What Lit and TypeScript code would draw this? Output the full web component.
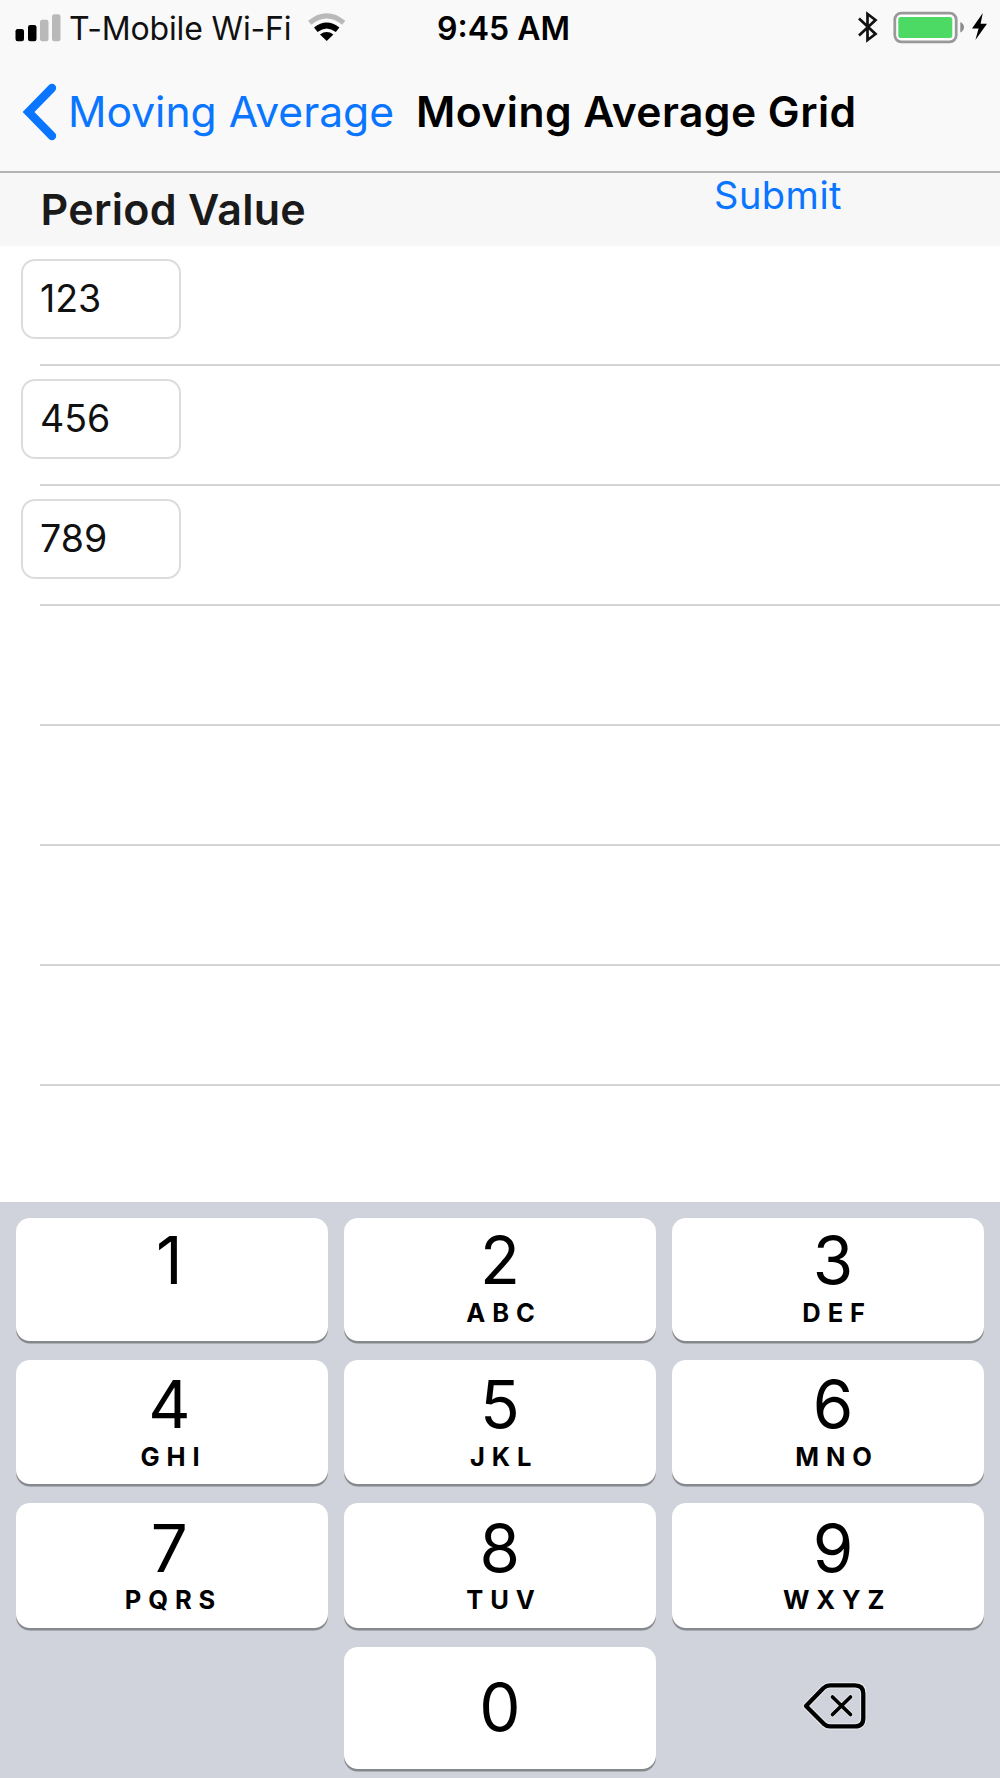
import { LitElement, html, css, nothing } from "lit";
import { customElement, property, state } from "lit/decorators.js";

@customElement("status-bar")
class StatusBar extends LitElement {
  static styles = css`
    :host {
      display: flex;
      align-items: center;
      height: 56px;
      box-sizing: border-box;
      padding-left: 15px;
      font-size: 32px;
      line-height: 1;
      color: #111;
      white-space: nowrap;
    }
    .signal { width: 46px; height: 28px; margin-bottom: 1px; }
    .carrier { width: 238px; padding: 1px 0 0 8px; letter-spacing: -0.15px; box-sizing: border-box; }
    .wifi { width: 40px; height: 30px; margin: 0 90px 2px 8px; }
    .time { width: 420px; padding-top: 1px; font-weight: 600; color: #000; }
    .bluetooth { width: 22px; height: 32px; margin: 0 14px 2px 0; }
    .battery { width: 73px; height: 32px; margin: 0 6px 3px 0; }
    .bolt { width: 16px; height: 28px; margin-bottom: 3px; }
    svg { display: block; flex: none; overflow: visible; }
    .carrier, .time { flex: none; }
  `;

  render() {
    return html`
      <svg class="signal" viewBox="15 13 46 28">
        <rect x="15.5" y="28" width="8.5" height="12.3" rx="2.2" fill="#000" />
        <rect x="28" y="24" width="8.5" height="16.3" rx="2.2" fill="#000" />
        <rect x="40" y="18.7" width="8.5" height="21.6" rx="2.2" fill="#b9b9b9" />
        <rect x="52" y="13.3" width="8.5" height="27" rx="2.2" fill="#b9b9b9" />
      </svg>
      <span class="carrier">T-Mobile Wi-Fi</span>
      <svg class="wifi" viewBox="307 12 40 30">
        <path d="M309.7 22.7Q326.7 9 343.7 22.7" fill="none" stroke="#b9b9b9" stroke-width="5" />
        <path d="M315.8 29.8Q326.7 21.2 337.6 29.8" fill="none" stroke="#000" stroke-width="5.8" />
        <path d="M320 34.4Q326.7 29.6 333.4 34.4L326.7 41Z" fill="#000" />
      </svg>
      <span class="time">9:45 AM</span>
      <svg class="bluetooth" viewBox="857 11 22 32">
        <path d="M859 18.5L875.5 34L867.5 40V14L875.5 20L859 35.5" fill="none" stroke="#111" stroke-width="2.7" />
      </svg>
      <svg class="battery" viewBox="893 11 73 32">
        <rect x="894.8" y="13.2" width="61.4" height="28.6" rx="6.5" fill="#fff" stroke="#999" stroke-width="2.8" />
        <rect x="898.3" y="17" width="54" height="21" rx="2.5" fill="#4cd964" />
        <path d="M960.3 22Q964 24 964 27.2T960.3 32.6Z" fill="#8c8c8c" />
      </svg>
      <svg class="bolt" viewBox="972 13 16 28">
        <path d="M982.8 13L972 28.6H978.6L975.4 40L987 23.8H980.6Z" fill="#000" />
      </svg>
    `;
  }
}

@customElement("nav-bar")
class NavBar extends LitElement {
  static styles = css`
    :host {
      display: flex;
      align-items: center;
      height: 117px;
      box-sizing: border-box;
      padding: 0 0 3px 22px;
      border-bottom: 2px solid #b4b4b4;
      font-size: 42.6px;
      line-height: 1;
      white-space: nowrap;
    }
    .chevron { width: 36px; height: 58px; flex: none; }
    .back { width: 358px; padding-left: 10px; box-sizing: border-box; color: #0a75ff; flex: none; }
    .title { font-weight: 600; color: #000; letter-spacing: 0.45px; }
  `;

  render() {
    return html`
      <svg class="chevron" viewBox="22 83 36 58">
        <path d="M52 88L28.5 112L52 136" fill="none" stroke="#0a75ff" stroke-width="8.4" stroke-linecap="round" />
      </svg>
      <span class="back">Moving Average</span>
      <span class="title">Moving Average Grid</span>
    `;
  }
}

@customElement("value-list")
class ValueList extends LitElement {
  @property({ type: Array }) values: string[] = [];
  @property({ type: Number }) rows = 7;

  static styles = css`
    :host { display: block; height: 956px; background: #fff; line-height: 1; }
    .row { display: flex; flex-direction: column; height: 120px; }
    .field {
      width: 160px;
      height: 80px;
      margin: 13px 0 0 21px;
      padding: 0 0 1px 17px;
      box-sizing: border-box;
      border: 2px solid #dcdcdc;
      border-radius: 14px;
      background: #fff;
      display: flex;
      align-items: center;
      font-size: 37.5px;
      color: #111;
    }
    .rule { height: 2px; margin: auto 0 0 40px; background: #d4d4d6; }
  `;

  render() {
    return html`${Array.from({ length: this.rows }, (_, i) => html`
      <div class="row">
        ${this.values[i] ? html`<div class="field">${this.values[i]}</div>` : nothing}
        <div class="rule"></div>
      </div>`)}`;
  }
}

@customElement("key-pad")
class KeyPad extends LitElement {
  static styles = css`
    :host {
      display: grid;
      grid-template-columns: repeat(3, 312.4px);
      grid-template-rows: 122.4px 124.6px 124.4px 122.8px;
      column-gap: 15.7px;
      row-gap: 19px;
      height: 576px;
      box-sizing: border-box;
      padding: 16.3px 15.6px 0;
      background: #d0d3db;
      line-height: 1;
      color: #000;
    }
    .key {
      display: flex;
      flex-direction: column;
      align-items: center;
      box-sizing: border-box;
      border-radius: 14px;
      background: #fff;
      box-shadow: 0 2.5px 0 #85888c;
      padding-top: 10px;
    }
    .left { padding-right: 5px; }
    .right { padding-left: 10px; }
    .low { padding-top: 12.6px; }
    .zero { justify-content: center; padding: 0 0 2px; }
    .digit { font-size: 65.5px; height: 65px; }
    .letters { font-size: 25.5px; font-weight: 700; letter-spacing: 6.9px; margin: 6.4px -8.4px 0 0; }
    .delete { width: 66px; height: 50px; place-self: center; margin: 0 0 5px 14px; }
  `;

  private keys = [
    ["1", ""], ["2", "ABC"], ["3", "DEF"],
    ["4", "GHI"], ["5", "JKL"], ["6", "MNO"],
    ["7", "PQRS"], ["8", "TUV"], ["9", "WXYZ"],
  ];

  render() {
    return html`
      ${this.keys.map(([digit, letters], i) => html`
        <div class="key ${["left", "middle", "right"][i % 3]} ${i > 2 ? "low" : ""}">
          <span class="digit">${digit}</span>
          ${letters ? html`<span class="letters">${letters}</span>` : nothing}
        </div>`)}
      <span></span>
      <div class="key zero"><span class="digit">0</span></div>
      <svg class="delete" viewBox="802 1681 66 50">
        <g fill="none" stroke-linejoin="round" stroke-linecap="round">
          <path d="M806 1706L823.5 1688Q826.5 1685.3 830 1685.3H855Q863.3 1685.3 863.3 1693.5V1718Q863.3 1726.4 855 1726.4H830Q826.5 1726.4 823.5 1723.6Z" stroke="#e6e8ec" stroke-width="6.5" />
          <path d="M806 1706L823.5 1688Q826.5 1685.3 830 1685.3H855Q863.3 1685.3 863.3 1693.5V1718Q863.3 1726.4 855 1726.4H830Q826.5 1726.4 823.5 1723.6Z" stroke="#000" stroke-width="4.3" />
          <path d="M832.5 1697L850.5 1714.5M850.5 1697L832.5 1714.5" stroke="#e0e2e7" stroke-width="5.5" />
          <path d="M832.5 1697L850.5 1714.5M850.5 1697L832.5 1714.5" stroke="#000" stroke-width="3.6" />
        </g>
      </svg>
    `;
  }
}

@customElement("app-root")
class AppRoot extends LitElement {
  @state() private values = ["123", "456", "789"];

  static styles = css`
    :host {
      display: block;
      width: 1000px;
      height: 1778px;
      overflow: hidden;
      background: #f9f9f9;
      font-family: Inter, "Liberation Sans", sans-serif;
    }
    .header {
      display: flex;
      height: 73px;
      box-sizing: border-box;
      background: #f7f7f7;
      line-height: 1;
      white-space: nowrap;
    }
    .heading {
      width: 714px;
      padding: 14.5px 0 0 40.5px;
      box-sizing: border-box;
      font-size: 43px;
      font-weight: 600;
      letter-spacing: 0.3px;
      color: #1a1a1a;
    }
    .submit { padding-top: 3px; font-size: 38px; letter-spacing: 0.5px; color: #0a75ff; }
  `;

  render() {
    return html`
      <status-bar></status-bar>
      <nav-bar></nav-bar>
      <div class="header">
        <span class="heading">Period Value</span>
        <span class="submit">Submit</span>
      </div>
      <value-list .values=${this.values}></value-list>
      <key-pad></key-pad>
    `;
  }
}
